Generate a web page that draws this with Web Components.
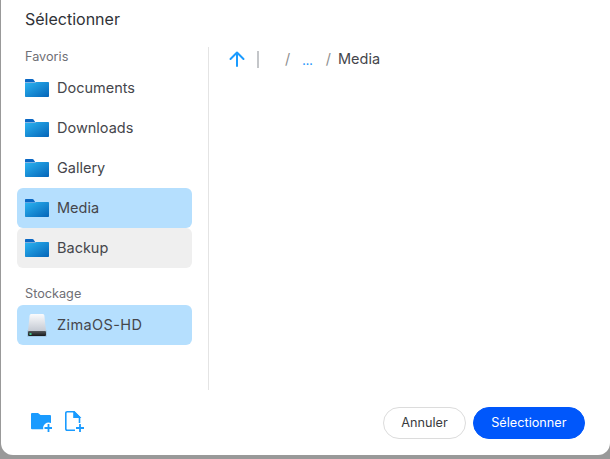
<!DOCTYPE html>
<html>
<head>
<meta charset="utf-8">
<style>
html, body { margin: 0; height: 100%; background: #999; overflow: hidden; }
body { font-family: Inter, "Liberation Sans", sans-serif; }
</style>
</head>
<body>
<file-dialog></file-dialog>

<template id="folder-icon">
  <svg width="24" height="18" viewBox="0 0 24 18">
    <defs>
      <linearGradient id="f" x1="0" y1="0" x2="1" y2="1">
        <stop offset="0" stop-color="#2cb5f2"/>
        <stop offset="1" stop-color="#0464b8"/>
      </linearGradient>
    </defs>
    <path d="M0 1C0 .4.4 0 1 0h6.500c.4 0 .8.2 1 .5L10.500 3.500H0z" fill="#0a68c4"/>
    <path d="M0 4h9.500L11 3h12c.6 0 1 .4 1 1v13c0 .6-.4 1-1 1H1c-.6 0-1-.4-1-1z" fill="url(#f)"/>
  </svg>
</template>

<script>
const sideItemStyle = `
<style>
:host {
  display: flex;
  align-items: center;
  height: 40px;
  padding-left: 8px;
  border-radius: 6px;
  font-size: 14.500px;
  color: #45464b;
}
:host([selected]) { background: #b5dffe; }
:host([hover]) { background: #efefef; }
.icon { width: 24px; height: 24px; margin-right: 8px; display: flex; align-items: center; justify-content: center; flex: none; }
svg { display: block; }
slot { display: block; margin-bottom: 2px; }
</style>
`

class SideItem extends HTMLElement {
  constructor() {
    super()
    this._shadowRoot = this.attachShadow({ mode: "open" })
  }

  connectedCallback() {
    const icon = this.getAttribute("icon") == "disk"
      ? `<svg width="22" height="24" viewBox="0 0 22 24">
          <defs>
            <linearGradient id="d" x1="0" y1="0" x2="0" y2="1">
              <stop offset="0" stop-color="#fafbfd"/>
              <stop offset="1" stop-color="#c4c9d2"/>
            </linearGradient>
            <linearGradient id="b" x1="0" y1="0" x2="0" y2="1">
              <stop offset="0" stop-color="#55595c"/>
              <stop offset="1" stop-color="#17191b"/>
            </linearGradient>
          </defs>
          <rect x="1" y="17" width="20" height="7" rx="1.500" fill="#8fb4d0" opacity=".5"/>
          <path d="M5.500 1h11c1 0 1.700.7 1.900 1.700L20 18H2L3.600 2.700C3.800 1.700 4.500 1 5.500 1z" fill="url(#d)"/>
          <rect x="2" y="18" width="18" height="5" rx="1" fill="url(#b)"/>
          <rect x="3.500" y="20" width="2" height="2" fill="#3fc58a"/>
        </svg>`
      : document.getElementById("folder-icon").innerHTML
    this._shadowRoot.innerHTML = `
    ${sideItemStyle}
    <span class="icon">${icon}</span><slot></slot>
    `
  }
}

const dialogStyle = `
<style>
:host {
  display: flex;
  flex-direction: column;
  box-sizing: border-box;
  width: 609px;
  height: 455px;
  margin-left: 1px;
  background: #fff;
  border-radius: 0 0 12px 12px;
}
h1 {
  margin: 0;
  padding: 10px 0 0 24px;
  height: 47px;
  box-sizing: border-box;
  font-size: 16px;
  font-weight: 400;
  line-height: 18px;
  color: #2f3237;
}
.body { display: flex; height: 343px; }
.side {
  box-sizing: border-box;
  width: 208px;
  padding: 0 16px;
  border-right: 1px solid #e4e4e4;
}
.label { font-size: 12.700px; color: #6f6f76; padding-left: 8px; line-height: 16px; }
.label.first { padding-top: 2px; height: 19px; }
.label.second { padding-top: 18px; height: 19px; }
.main { flex: 1; padding: 0 16px 0 20px; }
.crumbs { display: flex; align-items: center; height: 24px; font-size: 14.500px; color: #45464b; }
.sep { width: 2px; height: 17px; background: #c4c6c9; margin: 0 26px 0 12px; }
.slash { color: #8f8f8f; margin-bottom: 2px; }
.dots { color: #1f97fb; font-size: 11px; margin: 3px 13px 0 12px; font-weight: 600; }
.name { margin: 0 0 2px 7px; }
.footer { display: flex; align-items: center; padding: 0 25px 0 29px; height: 48px; margin-top: 9px; }
.tools { display: flex; align-items: flex-start; gap: 13px; flex: 1; height: 22px; }
.tools svg { display: block; }
.tools .file { margin-top: -1px; }
</style>
`

class FileDialog extends HTMLElement {
  constructor() {
    super()
    this._shadowRoot = this.attachShadow({ mode: "open" })
  }

  connectedCallback() {
    this._shadowRoot.innerHTML = `
    ${dialogStyle}
    <h1>Sélectionner</h1>
    <div class="body">
      <div class="side">
        <div class="label first">Favoris</div>
        <side-item>Documents</side-item>
        <side-item>Downloads</side-item>
        <side-item>Gallery</side-item>
        <side-item selected>Media</side-item>
        <side-item hover>Backup</side-item>
        <div class="label second">Stockage</div>
        <side-item icon="disk" selected><span style="letter-spacing:.4px">ZimaOS-HD</span></side-item>
      </div>
      <div class="main">
        <div class="crumbs">
          <svg width="16" height="16" viewBox="0 0 16 16" fill="none" stroke="#1a9bff" stroke-width="2" stroke-linecap="round" stroke-linejoin="round"><path d="M8 15V1.500M1.500 8L8 1.500 14.500 8"/></svg>
          <span class="sep"></span>
          <span class="slash">/</span>
          <span class="dots">...</span>
          <span class="slash">/</span>
          <span class="name">Media</span>
        </div>
      </div>
    </div>
    <div class="footer">
      <div class="tools">
        <svg width="22" height="20" viewBox="0 0 22 20">
          <path d="M1 2q0-1 1-1h6l2.500 2H20q1 0 1 1v7.100a5.500 5.500 0 0 0-7.700 6.200H2q-1 0-1-1z" fill="#1a9bff"/>
          <path d="M18.500 12v8M14.500 16h8" stroke="#1a9bff" stroke-width="1.800" fill="none"/>
        </svg>
        <svg class="file" width="20" height="21" viewBox="0 0 20 21" fill="none" stroke="#1a9bff" stroke-width="1.600">
          <path d="M10 19.200H2.200q-1.400 0-1.400-1.400V2.200Q.8.800 2.200.800H9L14.500 6.300V12"/>
          <path d="M9 .8V6.300h5.500z" fill="#1a9bff"/>
          <path d="M15 13v8M11 17h8" stroke-width="1.800"/>
        </svg>
      </div>
      <dialog-button>Annuler</dialog-button>
      <dialog-button primary style="margin-left:7px">Sélectionner</dialog-button>
    </div>
    `
  }
}

class DialogButton extends HTMLElement {
  constructor() {
    super()
    this._shadowRoot = this.attachShadow({ mode: "open" })
  }

  connectedCallback() {
    this._shadowRoot.innerHTML = `
    <style>
    :host {
      display: block;
      box-sizing: border-box;
      height: 32px;
      line-height: 30px;
      padding: 0 17px;
      border: 1px solid #dcdcdc;
      border-radius: 16px;
      font-size: 12.700px;
      color: #3a3c40;
      background: #fff;
    }
    :host([primary]) { padding: 0 17.500px; background: #0057fb; border-color: #0057fb; color: #fff; }
    </style>
    <slot></slot>
    `
  }
}

window.customElements.define("side-item", SideItem)
window.customElements.define("dialog-button", DialogButton)
window.customElements.define("file-dialog", FileDialog)
</script>
</body>
</html>
